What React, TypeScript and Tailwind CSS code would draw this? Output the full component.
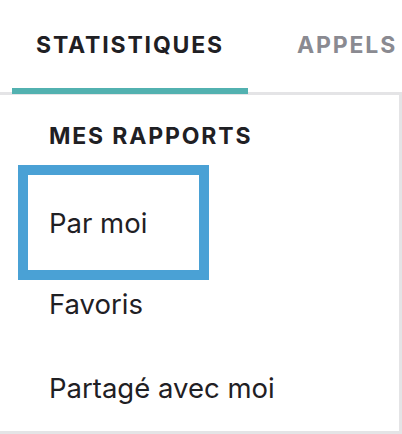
export default function App() {
  return (
    <div className="w-[402px] h-[434px] bg-white overflow-hidden" style={{ fontFamily: "Inter, 'Noto Sans', sans-serif" }}>
      <div className="relative z-10 flex h-[94px]">
        <div className="ml-[12px] w-[236px] h-[94px] border-b-[6px] border-[#52b1b0] flex items-center justify-center pt-[2px]">
          <span className="text-[23px] leading-[28px] font-bold tracking-[0.08em] text-[#1f2024]">STATISTIQUES</span>
        </div>
        <div className="ml-[49px] h-[88px] flex items-center pt-[2px]">
          <span className="text-[23px] leading-[28px] font-bold tracking-[0.08em] text-[#8a8a91]">APPELS</span>
        </div>
      </div>
      <div className="-mt-[2px] h-[342px] border-t-[3px] border-r-[3px] border-b-[3px] border-[#e4e4e6] flex flex-col">
        <div className="mt-[27px] ml-[49px] text-[23px] leading-[28px] font-bold tracking-[0.08em] text-[#1f2024]">MES RAPPORTS</div>
        <div className="mt-[15px] ml-[18px] w-[191px] h-[115px] border-[10px] border-[#4aa1d5] flex items-center pl-[21px]">
          <span className="text-[27.5px] leading-[32px] text-[#1f2024]">Par moi</span>
        </div>
        <div className="mt-[8px] ml-[49px] text-[27.5px] leading-[32px] text-[#1f2024]">Favoris</div>
        <div className="mt-[52px] ml-[49px] text-[27.5px] leading-[32px] text-[#1f2024]">Partagé avec moi</div>
      </div>
    </div>
  );
}
